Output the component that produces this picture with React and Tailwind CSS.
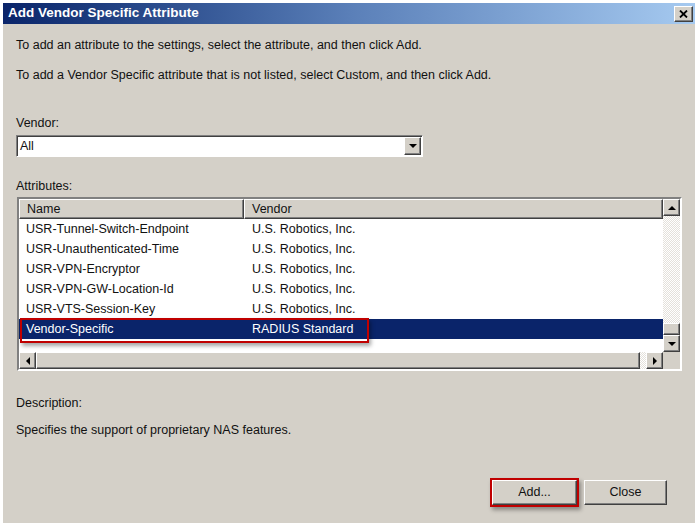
import React from "react";

const rows = [
  { name: "USR-Tunnel-Switch-Endpoint", vendor: "U.S. Robotics, Inc." },
  { name: "USR-Unauthenticated-Time", vendor: "U.S. Robotics, Inc." },
  { name: "USR-VPN-Encryptor", vendor: "U.S. Robotics, Inc." },
  { name: "USR-VPN-GW-Location-Id", vendor: "U.S. Robotics, Inc." },
  { name: "USR-VTS-Session-Key", vendor: "U.S. Robotics, Inc." },
  { name: "Vendor-Specific", vendor: "RADIUS Standard", selected: true },
];

// classic raised 3d border
const raised =
  "border border-t-white border-l-white border-r-[#404040] border-b-[#404040] shadow-[inset_-1px_-1px_0_#808080]";

function Arrow({ dir }) {
  const pts = {
    up: "0,4 4,0 8,4",
    down: "0,0 8,0 4,4",
    left: "4,0 4,8 0,4",
    right: "0,0 0,8 4,4",
  }[dir];
  const vert = dir === "up" || dir === "down";
  return (
    <svg width={vert ? 8 : 4} height={vert ? 4 : 8} viewBox={vert ? "0 0 8 4" : "0 0 4 8"}>
      <polygon points={pts} fill="#000" />
    </svg>
  );
}

function ScrollBtn({ dir }) {
  return (
    <div className={`w-[17px] h-[17px] bg-[#d4d0c8] flex items-center justify-center ${raised}`}>
      <Arrow dir={dir} />
    </div>
  );
}

export default function App() {
  return (
    <div
      className="w-[699px] h-[528px] bg-white pt-[3px] pl-[3px] text-[12.5px] text-[#111]"
      style={{ fontFamily: '"Liberation Sans", Arial, sans-serif' }}
    >
      <div className="w-[692px] h-[520px] bg-[#d4d0c8] flex flex-col">
        {/* title bar */}
        <div className="h-[21px] flex items-center justify-between pl-[5px] pr-[2px] bg-gradient-to-r from-[#0a246a] via-[#5a7fb8] to-[#a6caf0]">
          <span className="text-white font-bold text-[13.5px]">
            Add Vendor Specific Attribute
          </span>
          <div className={`w-[19px] h-[16px] bg-[#d4d0c8] flex items-center justify-center ${raised}`}>
            <svg width="9" height="8" viewBox="0 0 9 8">
              <path d="M1 0.5 L8 7.5 M8 0.5 L1 7.5" stroke="#000" strokeWidth="1.8" />
            </svg>
          </div>
        </div>

        <div className="flex flex-col pl-[13px]">
          <p className="mt-[13px] leading-[16px]">
            To add an attribute to the settings, select the attribute, and then click Add.
          </p>
          <p className="mt-[14px] leading-[16px]">
            To add a Vendor Specific attribute that is not listed, select Custom, and then click Add.
          </p>

          <p className="mt-[32px] leading-[16px]">Vendor:</p>
          <div className="mt-[4px] w-[407px] h-[22px] bg-white border border-t-[#808080] border-l-[#808080] border-r-white border-b-white shadow-[inset_1px_1px_0_#404040] flex items-center justify-between pl-[3px] pr-[1px]">
            <span>All</span>
            <div className={`w-[17px] h-[18px] bg-[#d4d0c8] flex items-center justify-center ${raised}`}>
              <Arrow dir="down" />
            </div>
          </div>

          <p className="mt-[21px] leading-[16px]">Attributes:</p>
          {/* list view */}
          <div className="mt-[3px] ml-[1px] w-[665px] h-[174px] border-2 border-t-[#808080] border-l-[#808080] border-r-white border-b-white flex flex-col relative">
            <div className="flex h-[153px]">
              <div className="w-[644px] bg-white flex flex-col">
                <div className="flex h-[20px] bg-[#d4d0c8]">
                  <div className={`w-[225px] pl-[7px] flex items-center ${raised}`}>Name</div>
                  <div className={`flex-1 pl-[7px] flex items-center ${raised}`}>Vendor</div>
                </div>
                {rows.map((r) => (
                  <div
                    key={r.name}
                    className={`flex h-[20px] items-center ${r.selected ? "bg-[#0a246a] text-white" : ""}`}
                  >
                    <div className="w-[225px] pl-[7px]">{r.name}</div>
                    <div className="pl-[8px]">{r.vendor}</div>
                  </div>
                ))}
              </div>
              <div className="w-[17px] flex flex-col">
                <ScrollBtn dir="up" />
                <div className="flex-1 bg-[repeating-conic-gradient(#ffffff_0_25%,#e4e1db_0_50%)] bg-[length:2px_2px]" />
                <div className={`h-[12px] bg-[#d4d0c8] ${raised}`} />
                <ScrollBtn dir="down" />
              </div>
            </div>
            <div className="flex h-[17px]">
              <div className="w-[644px] flex">
                <ScrollBtn dir="left" />
                <div className={`flex-1 bg-[#d4d0c8] ${raised}`} />
                <div className="w-[6px] bg-[repeating-conic-gradient(#ffffff_0_25%,#e4e1db_0_50%)] bg-[length:2px_2px]" />
                <ScrollBtn dir="right" />
              </div>
              <div className="w-[17px] bg-[#d4d0c8]" />
            </div>
            {/* red highlight annotation */}
            <div className="absolute left-[1px] top-[119px] w-[349px] h-[25px] border-2 border-[#c00000] shadow-[2px_3px_4px_rgba(0,0,0,0.35)]" />
          </div>

          <p className="mt-[24px] leading-[16px]">Description:</p>
          <p className="mt-[11px] leading-[16px]">Specifies the support of proprietary NAS features.</p>

          <div className="mt-[42px] flex justify-end gap-[7px] pr-[28px]">
            <div className="relative">
              <div className={`w-[85px] h-[25px] bg-[#d4d0c8] flex items-center justify-center ${raised}`}>
                Add...
              </div>
              <div className="absolute -left-[2px] -top-[2px] w-[89px] h-[29px] border-2 border-[#c00000] shadow-[2px_3px_4px_rgba(0,0,0,0.35)]" />
            </div>
            <div className={`w-[83px] h-[25px] bg-[#d4d0c8] flex items-center justify-center ${raised}`}>
              Close
            </div>
          </div>
        </div>
      </div>
    </div>
  );
}
